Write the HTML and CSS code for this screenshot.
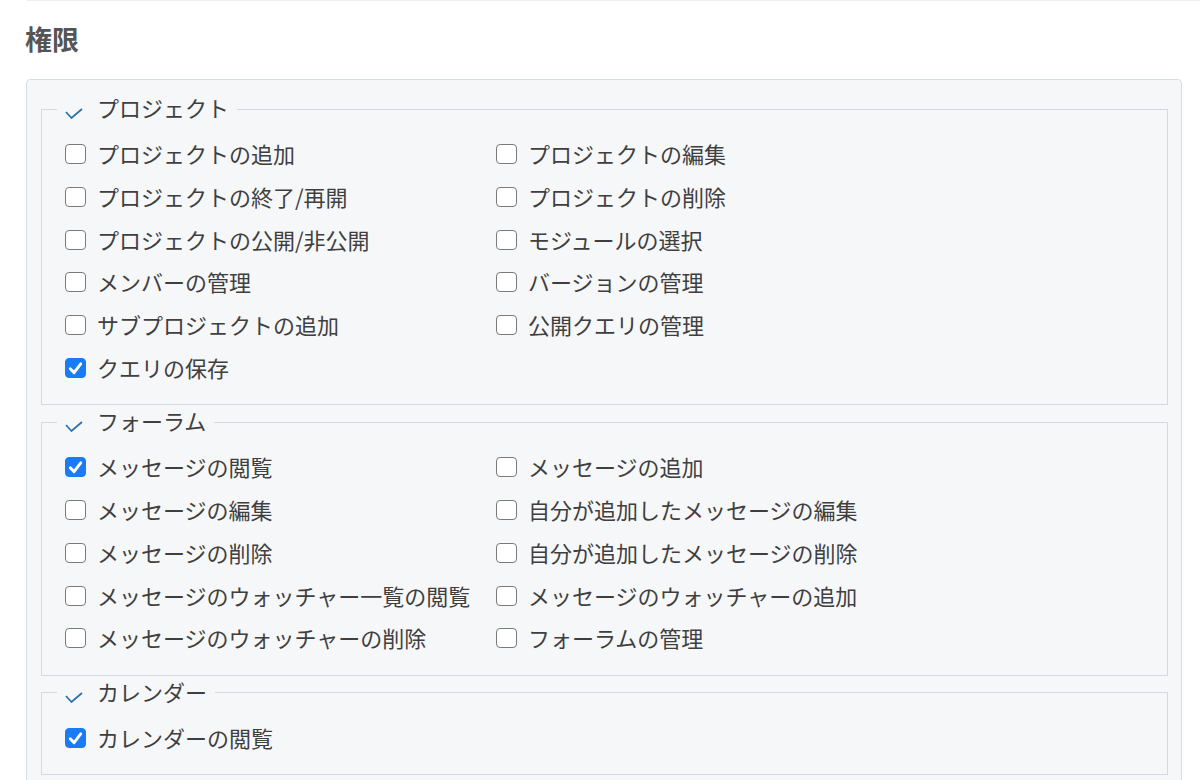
FILE: index.html
```html
<!DOCTYPE html>
<html lang="ja">
<head>
<meta charset="UTF-8">
<title>権限</title>
<link rel="stylesheet" href="styles.css">
</head>
<body>
<div class="topline"></div>
<h2>権限</h2>
<div class="box">
    <fieldset>
        <legend><svg class="toggle" viewBox="0 0 18 11" width="18" height="11"><polyline points="1,4 6.5,10 17,1" /></svg>プロジェクト</legend>
        <div class="perms">
            <label><input type="checkbox">プロジェクトの追加</label>
            <label><input type="checkbox">プロジェクトの編集</label>
            <label><input type="checkbox">プロジェクトの終了/再開</label>
            <label><input type="checkbox">プロジェクトの削除</label>
            <label><input type="checkbox">プロジェクトの公開/非公開</label>
            <label><input type="checkbox">モジュールの選択</label>
            <label><input type="checkbox">メンバーの管理</label>
            <label><input type="checkbox">バージョンの管理</label>
            <label><input type="checkbox">サブプロジェクトの追加</label>
            <label><input type="checkbox">公開クエリの管理</label>
            <label><input type="checkbox" checked>クエリの保存</label>
        </div>
    </fieldset>
    <fieldset>
        <legend><svg class="toggle" viewBox="0 0 18 11" width="18" height="11"><polyline points="1,4 6.5,10 17,1" /></svg>フォーラム</legend>
        <div class="perms">
            <label><input type="checkbox" checked>メッセージの閲覧</label>
            <label><input type="checkbox">メッセージの追加</label>
            <label><input type="checkbox">メッセージの編集</label>
            <label><input type="checkbox">自分が追加したメッセージの編集</label>
            <label><input type="checkbox">メッセージの削除</label>
            <label><input type="checkbox">自分が追加したメッセージの削除</label>
            <label><input type="checkbox">メッセージのウォッチャー一覧の閲覧</label>
            <label><input type="checkbox">メッセージのウォッチャーの追加</label>
            <label><input type="checkbox">メッセージのウォッチャーの削除</label>
            <label><input type="checkbox">フォーラムの管理</label>
        </div>
    </fieldset>
    <fieldset>
        <legend><svg class="toggle" viewBox="0 0 18 11" width="18" height="11"><polyline points="1,4 6.5,10 17,1" /></svg>カレンダー</legend>
        <div class="perms">
            <label><input type="checkbox" checked>カレンダーの閲覧</label>
        </div>
    </fieldset>
</div>
</body>
</html>
```

FILE: styles.css
```css
body {
    margin: 0;
    background: #fff;
    font-family: "Noto Sans CJK JP", "Noto Sans", sans-serif;
    color: #3f3f3f;
}
.topline {
    margin-left: 27px;
    border-top: 1px solid #eeeeee;
}
h2 {
    margin: 21px 0 23px 25px;
    font-size: 27px;
    line-height: 34px;
    font-weight: bold;
    color: #555;
}
.box {
    margin: 0 18px 0 26px;
    padding: 14px 13px 0 14px;
    border: 1px solid #d7dde5;
    border-radius: 4px;
    background: #f6f7f9;
    height: 700px;
}
fieldset {
    margin: 0 0 2px 0;
    padding: 8px 23px 16px 23px;
    border: 1px solid #d3d9e1;
}
legend {
    margin-left: -8px;
    padding: 0 8px 4px 8px;
    font-size: 22px;
    line-height: 26px;
    display: flex;
    align-items: center;
}
.toggle {
    margin: 13px 14px 0 0;
    fill: none;
    stroke: #2b70aa;
    stroke-width: 1.7;
}
.perms {
    display: grid;
    grid-template-columns: 431px 431px;
    grid-auto-rows: 42.7px;
}
.perms label {
    display: flex;
    align-items: center;
    font-size: 22px;
    white-space: nowrap;
}
.perms input {
    appearance: none;
    -webkit-appearance: none;
    box-sizing: border-box;
    margin: 2px 11px 0 0;
    width: 21px;
    height: 20px;
    border: 1.5px solid #7a7a7a;
    border-radius: 4px;
    background: #fff;
    flex-shrink: 0;
}
.perms input:checked {
    border-color: #1a7cf5;
    background: #1a7cf5 url("data:image/svg+xml;utf8,<svg xmlns='http://www.w3.org/2000/svg' viewBox='0 0 20 20'><polyline points='4.5,10.5 8.5,14.5 15.5,5.5' fill='none' stroke='white' stroke-width='3' stroke-linecap='round' stroke-linejoin='round'/></svg>") center / 100% no-repeat;
}
```
